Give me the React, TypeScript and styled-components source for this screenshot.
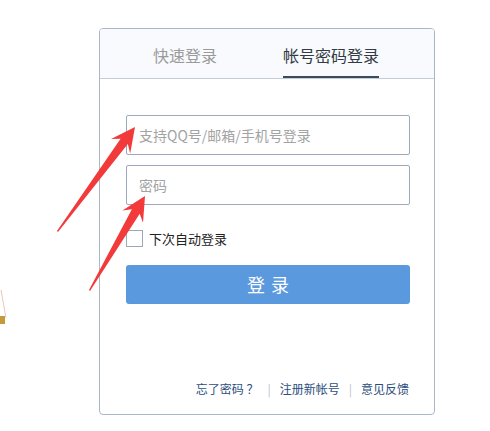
import styled, { createGlobalStyle } from "styled-components";

const GlobalStyle = createGlobalStyle`
  html, body {
    margin: 0;
    padding: 0;
    background: #ffffff;
    font-family: "Noto Sans CJK SC", "Liberation Sans", sans-serif;
  }
`;

const Page = styled.div`
  position: relative;
  width: 490px;
  height: 431px;
  overflow: hidden;
  padding: 28px 0 0 99px;
  box-sizing: border-box;
`;

const Panel = styled.div`
  width: 336px;
  height: 387px;
  box-sizing: border-box;
  border: 1px solid #a9b7c9;
  border-radius: 4px;
  display: flex;
  flex-direction: column;
  overflow: hidden;
  background: #fff;
`;

const Tabs = styled.div`
  height: 50px;
  box-sizing: border-box;
  background: #f8fafd;
  border-bottom: 1px solid #c3cdda;
  display: flex;
  gap: 66px;
  padding-left: 53px;
`;

const Tab = styled.div<{ $active?: boolean }>`
  display: flex;
  align-items: center;
  height: 100%;
  box-sizing: border-box;
  font-size: 16px;
  color: ${({ $active }) => ($active ? "#333a44" : "#9a9a9a")};
  border-bottom: 2px solid ${({ $active }) => ($active ? "#3c4a5c" : "transparent")};
  margin-bottom: -1px;
  padding-top: 5px;
`;

const Body = styled.div`
  flex: 1;
  display: flex;
  flex-direction: column;
  padding: 36px 24px 16px 26px;
`;

const Input = styled.div`
  height: 40px;
  box-sizing: border-box;
  border: 1px solid #9eaabb;
  border-radius: 2px;
  display: flex;
  align-items: center;
  padding-left: 12px;
  font-size: 14px;
  color: #a3a3a3;
  & + & {
    margin-top: 10px;
  }
`;

const Remember = styled.label`
  display: flex;
  align-items: center;
  gap: 6px;
  margin-top: 24px;
  font-size: 13px;
  color: #222;
`;

const Box = styled.span`
  width: 17px;
  height: 17px;
  box-sizing: border-box;
  border: 1px solid #9ea8b4;
  background: #fff;
`;

const LoginButton = styled.div`
  margin-top: 17px;
  height: 39px;
  border-radius: 3px;
  background: #5b99de;
  color: #fff;
  font-size: 18px;
  letter-spacing: 6px;
  display: flex;
  align-items: center;
  justify-content: center;
  padding-left: 6px;
  padding-bottom: 2px;
  box-sizing: border-box;
`;

const Footer = styled.div`
  margin-top: auto;
  display: flex;
  justify-content: flex-end;
  align-items: center;
  gap: 9px;
  font-size: 12px;
  color: #2c4e7d;
  padding-right: 1px;
  padding-bottom: 1px;
`;

const Sep = styled.span`
  color: #b8c0cc;
`;

const Overlay = styled.svg`
  position: absolute;
  left: 0;
  top: 0;
  pointer-events: none;
`;

export default function App() {
  return (
    <>
      <GlobalStyle />
      <Page>
        <Panel>
          <Tabs>
            <Tab>快速登录</Tab>
            <Tab $active>帐号密码登录</Tab>
          </Tabs>
          <Body>
            <Input>支持QQ号/邮箱/手机号登录</Input>
            <Input>密码</Input>
            <Remember>
              <Box />
              下次自动登录
            </Remember>
            <LoginButton>登录</LoginButton>
            <Footer>
              <span>忘了密码 ？</span>
              <Sep>|</Sep>
              <span>注册新帐号</span>
              <Sep>|</Sep>
              <span>意见反馈</span>
            </Footer>
          </Body>
        </Panel>
        <Overlay width="490" height="431" viewBox="0 0 490 431">
          <polygon
            fill="#f23a3a"
            points="57,231 120.6,138.7 111,139 135,127 130.2,153.4 127.8,144.1 58,232"
          />
          <polygon
            fill="#f23a3a"
            points="89,290 131.9,209.2 122.4,210.5 145,196 143,222.7 139.7,213.8 90,291"
          />
          <path d="M1 290 L6 318" stroke="#e9c9b8" strokeWidth="1" fill="none" />
          <rect x="0" y="316" width="5" height="8" fill="#c49a3c" />
        </Overlay>
      </Page>
    </>
  );
}
